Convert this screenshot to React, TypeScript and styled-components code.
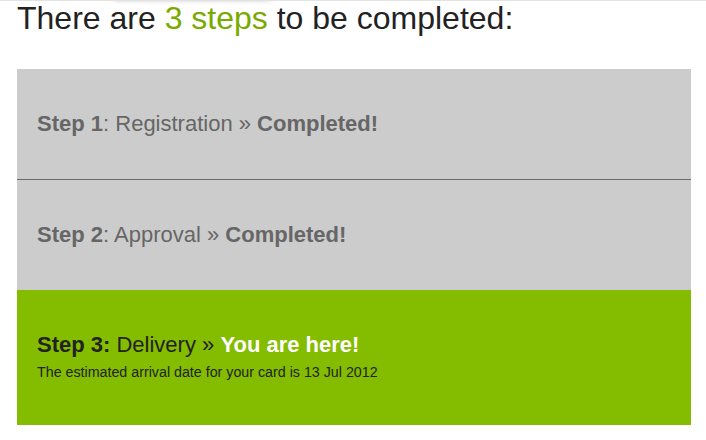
import React from 'react';
import styled, { createGlobalStyle } from 'styled-components';

const GlobalStyle = createGlobalStyle`
  html, body {
    margin: 0;
    padding: 0;
    background: #fff;
  }
  body {
    font-family: "Liberation Sans", Arial, sans-serif;
    border-top: 1px solid #e3e3e3;
  }
`;

const Page = styled.div`
  position: relative;
  padding: 0 15px 0 17px;
  margin-top: -1px;
`;

// faint shadow left by a menu sitting just above the page
const TopShadow = styled.div`
  position: absolute;
  top: -6px;
  left: 112px;
  width: 162px;
  height: 6px;
  border-radius: 0 0 6px 6px;
  box-shadow: 0 1px 4px rgba(0, 0, 0, 0.18);
`;

const Title = styled.h1`
  margin: 0 0 32px;
  font-size: 32px;
  font-weight: normal;
  line-height: 37px;
  color: #222;
`;

const Accent = styled.span`
  color: #78aa00;
`;

const Steps = styled.div`
  display: flex;
  flex-direction: column;
`;

const Step = styled.div<{ $current?: boolean; $divider?: boolean }>`
  background: ${p => (p.$current ? '#84bc00' : '#cccccc')};
  color: ${p => (p.$current ? '#222' : '#666')};
  padding: 42px 20px ${p => (p.$current ? '45px' : '43px')};
  border-bottom: ${p => (p.$divider ? '1px solid #6a6a6a' : 'none')};
`;

const StepLine = styled.div`
  font-size: 22px;
  line-height: 25px;
`;

const Status = styled.b<{ $here?: boolean }>`
  color: ${p => (p.$here ? '#fff' : 'inherit')};
`;

const Note = styled.div`
  margin-top: 7px;
  font-size: 14.25px;
  line-height: 16px;
  color: #222;
`;

export default function App() {
  return (
    <>
      <GlobalStyle />
      <Page>
        <TopShadow />
        <Title>
          There are <Accent>3 steps</Accent> to be completed:
        </Title>
        <Steps>
          <Step $divider>
            <StepLine>
              <b>Step 1</b>: Registration » <Status>Completed!</Status>
            </StepLine>
          </Step>
          <Step>
            <StepLine>
              <b>Step 2</b>: Approval » <Status>Completed!</Status>
            </StepLine>
          </Step>
          <Step $current>
            <StepLine>
              <b>Step 3:</b> Delivery » <Status $here>You are here!</Status>
            </StepLine>
            <Note>The estimated arrival date for your card is 13 Jul 2012</Note>
          </Step>
        </Steps>
      </Page>
    </>
  );
}
